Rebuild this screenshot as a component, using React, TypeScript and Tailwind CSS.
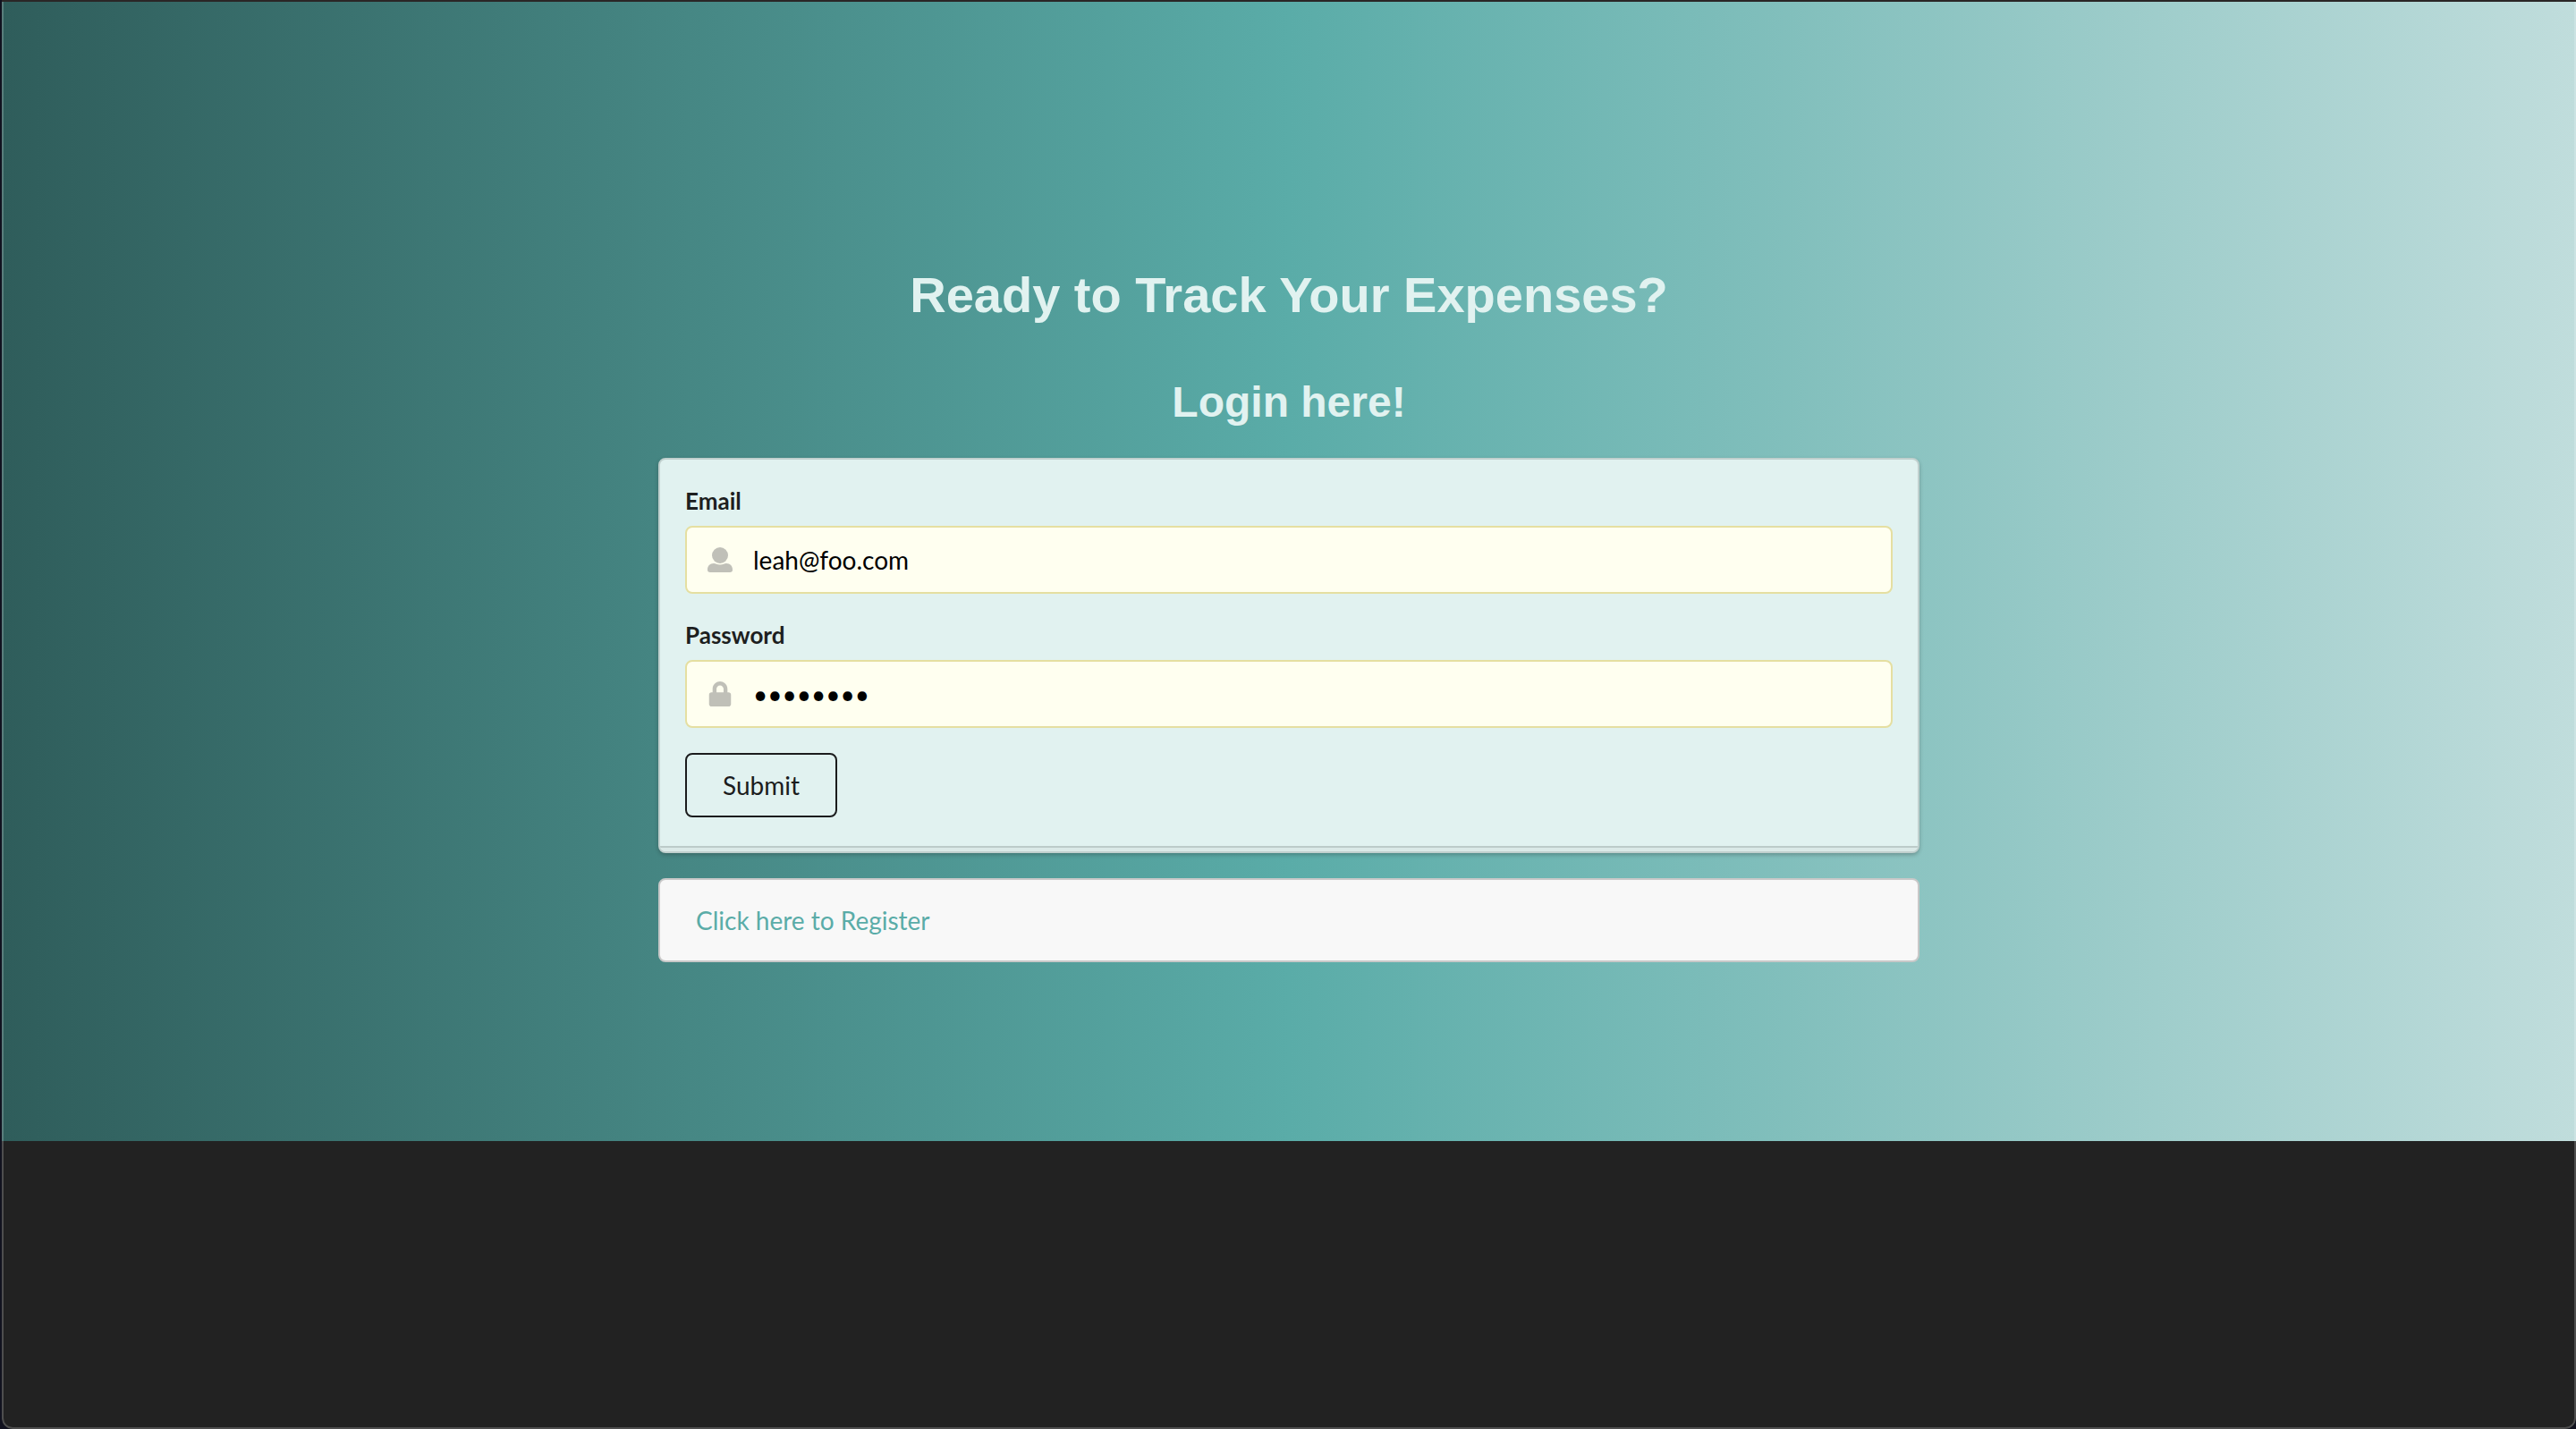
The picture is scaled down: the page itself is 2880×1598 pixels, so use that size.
import React from "react";

function UserIcon() {
  return (
    <svg viewBox="0 0 28 28" className="size-7" fill="currentColor" aria-hidden="true">
      <circle cx="14" cy="9" r="9" />
      <path d="M7 18c2 0 3.500 1.500 7 1.500S19 18 21 18c4.500 0 7 3.200 7 7 0 2.200-1 3-3 3H3c-2 0-3-.8-3-3 0-3.800 2.500-7 7-7z" />
    </svg>
  );
}

function LockIcon() {
  return (
    <svg viewBox="0 0 448 512" className="size-7" fill="currentColor" aria-hidden="true">
      <path d="M400 224h-24v-72C376 68.200 307.800 0 224 0S72 68.200 72 152v72H48c-26.500 0-48 21.500-48 48v192c0 26.500 21.500 48 48 48h352c26.500 0 48-21.500 48-48V272c0-26.500-21.500-48-48-48zm-104 0H152v-72c0-39.700 32.300-72 72-72s72 32.300 72 72v72z" />
    </svg>
  );
}

type FieldProps = {
  id: string;
  label: string;
  type: string;
  value: string;
  icon: React.ReactNode;
};

function Field({ id, label, type, value, icon }: FieldProps) {
  return (
    <div className="mb-7">
      <label htmlFor={id} className="mb-2.5 block text-[26px] leading-9 font-bold text-[#1d1f1f]">
        {label}
      </label>
      <div className="flex h-19 items-center rounded-lg border-2 border-[#e5dfa1] bg-[#fffff0] focus-within:border-[#96c8da]">
        <span className="flex w-[74px] shrink-0 justify-center text-[#c0c0b8]">{icon}</span>
        <input
          id={id}
          type={type}
          defaultValue={value}
          className="h-full min-w-0 flex-1 bg-transparent text-[28px] text-black outline-none"
        />
      </div>
    </div>
  );
}

export default function App() {
  return (
    <div className="flex min-h-screen bg-[#11121f] pl-0.5 font-[Lato,sans-serif]">
      <div className="relative flex-1 overflow-hidden rounded-b-xl border-t-2 border-[#2a2626] bg-[#222222]">
        <main className="flex flex-col items-center bg-[linear-gradient(90deg,#2f5d5b_0%,#5aaca8_50%,#c0dddc_100%)] pt-73 pb-50">
          <div className="w-full max-w-[1410px]">
            <h1 className="text-center font-['Liberation_Sans',sans-serif] text-[56px] leading-[72px] font-bold text-[#e1f2f0]">
              Ready to Track Your Expenses?
            </h1>
            <h2 className="mt-12 mb-[26px] text-center font-['Liberation_Sans',sans-serif] text-5xl leading-[72px] font-bold text-[#e1f2f0]">
              Login here!
            </h2>
            <form
              className="rounded-lg border-2 border-[#c0d0ce] bg-[#e1f2f0] shadow-[0_2px_4px_rgba(34,36,38,0.3)]"
              onSubmit={(e) => e.preventDefault()}
            >
              <div className="px-7 pt-7 pb-8">
                <Field id="email" label="Email" type="email" value="leah@foo.com" icon={<UserIcon />} />
                <Field id="password" label="Password" type="password" value="password" icon={<LockIcon />} />
                <button
                  type="submit"
                  className="block h-18 w-[170px] rounded-lg border-2 border-[#1b1c1d] text-[28px] text-[#1b1c1d]"
                >
                  Submit
                </button>
              </div>
              <div className="h-1.5 rounded-b-md border-t-2 border-[#bccbc9] bg-[#dae9e7]" />
            </form>
            <div className="mt-7 flex h-[94px] items-center rounded-lg border-2 border-[#c8c8c8] bg-[#f8f8f8] px-10">
              <a href="#register" className="text-[28px] text-[#5aaca8]">
                Click here to Register
              </a>
            </div>
          </div>
        </main>
        <div className="pointer-events-none absolute inset-0 rounded-b-xl border-x-2 border-b-2 border-white/20" />
      </div>
    </div>
  );
}
